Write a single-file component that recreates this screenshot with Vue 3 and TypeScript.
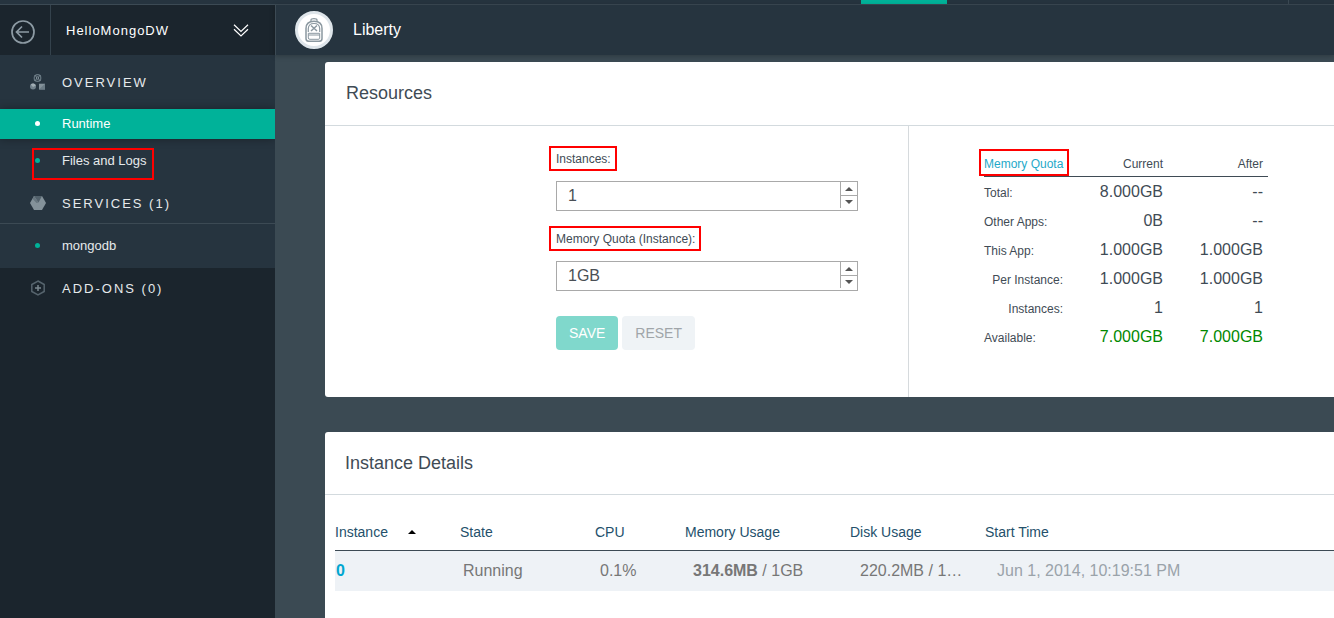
<script setup lang="ts">
import { ref } from 'vue'

interface QuotaRow {
  label: string
  current: string
  after: string
  indent?: boolean
  good?: boolean
}

interface InstanceRow {
  id: string
  state: string
  cpu: string
  memoryUsed: string
  memoryTotal: string
  disk: string
  started: string
}

const sizes = ['512MB', '1GB', '2GB']
const instances = ref('1')
const memory = ref('1GB')

const quotaRows: QuotaRow[] = [
  { label: 'Total:', current: '8.000GB', after: '--' },
  { label: 'Other Apps:', current: '0B', after: '--' },
  { label: 'This App:', current: '1.000GB', after: '1.000GB' },
  { label: 'Per Instance:', current: '1.000GB', after: '1.000GB', indent: true },
  { label: 'Instances:', current: '1', after: '1', indent: true },
  { label: 'Available:', current: '7.000GB', after: '7.000GB', good: true },
]

const instanceRows: InstanceRow[] = [
  {
    id: '0',
    state: 'Running',
    cpu: '0.1%',
    memoryUsed: '314.6MB',
    memoryTotal: '1GB',
    disk: '220.2MB / 1GB',
    started: 'Jun 1, 2014, 10:19:51 PM',
  },
]

function stepInstances(delta: number) {
  instances.value = String(Math.max(1, Number(instances.value) + delta))
}

function stepMemory(delta: number) {
  const next = sizes.indexOf(memory.value) + delta
  memory.value = sizes[Math.min(sizes.length - 1, Math.max(0, next))]
}
</script>

<template>
  <div class="app">
    <div class="topbar">
      <span class="topbar-tab"></span>
      <span class="topbar-divider"></span>
    </div>
    <div class="shell">
      <aside class="sidebar">
        <div class="app-switcher">
          <button class="back" type="button" aria-label="Back">
            <svg width="24" height="24" viewBox="0 0 24 24" fill="none" stroke="#8d9ba4" stroke-width="1.700">
              <circle cx="12" cy="12" r="11" />
              <path d="M18 12H6M11 6.500 5.500 12l5.500 5.500" />
            </svg>
          </button>
          <button class="app-name" type="button">
            <span>HelloMongoDW</span>
            <svg width="16" height="13" viewBox="0 0 16 13" fill="none" stroke="#fff" stroke-width="1.200">
              <path d="M1 .800 8 7.500l7-6.700M1 5.300 8 12l7-6.700" />
            </svg>
          </button>
        </div>
        <nav>
          <div class="group">
            <a class="section overview" href="#overview">
              <svg width="16" height="16" viewBox="0 0 16 16">
                <circle cx="7.500" cy="4" r="3.300" fill="none" stroke="#677781" stroke-width="1.200" />
                <circle cx="7.500" cy="4" r="1.200" fill="none" stroke="#84939c" />
                <path d="M4.500 1l2 2M10.500 1l-2 2M4.500 7l2-2M10.500 7l-2-2" stroke="#84939c" stroke-width=".800" />
                <circle cx="3" cy="12.500" r="3" fill="#71818b" />
                <path d="M.800 10.500 3 13l2.800-1.500A3 3 0 0 0 .800 10.500Z" fill="#a1adb3" />
                <path d="M9 9.700H15v5.800H9Z" fill="#84929a" />
                <path d="M9 15.500 15 9.700v5.800Z" fill="#6b7b85" />
              </svg>
              OVERVIEW
            </a>
            <a class="item active" href="#runtime"><i class="dot"></i>Runtime</a>
            <a class="item tall flagged" href="#files"><i class="dot"></i>Files and Logs</a>
            <a class="section services" href="#services">
              <svg width="16" height="16" viewBox="0 0 16 16">
                <path d="M4 1h8l4 7-4 7H4L0 8Z" fill="#84929a" />
                <path d="M4 1h8L8.500 7.500Z" fill="#52616b" />
                <path d="M4 1 2.500 3.700 6.500 8 8.500 7.500Z" fill="#67767f" />
              </svg>
              SERVICES (1)
            </a>
            <a class="item tall" href="#mongodb"><i class="dot"></i>mongodb</a>
          </div>
          <a class="section" href="#addons">
            <svg width="16" height="16" viewBox="0 0 16 16" fill="none" stroke="#56646d">
              <path d="M8 1l6.200 3.500v7L8 15l-6.200-3.500v-7Z" stroke-width="1.500" />
              <path d="M8 5v6M5 8h6" stroke="#7b878f" stroke-width="1.500" />
            </svg>
            ADD-ONS (0)
          </a>
        </nav>
      </aside>

      <div class="content">
        <header class="runtime-header">
          <span class="badge">
            <svg width="18" height="24" viewBox="0 0 18 24" fill="none" stroke="#8b98a0" stroke-width="1.200">
              <path d="M6 3.200V2Q6 .700 9 .700T12 2v1.200" />
              <path d="M1 10.500Q1 3.200 9 3.200t8 7.300V20.500Q17 23.300 14 23.300H4Q1 23.300 1 20.500Z" stroke-width="1.500" />
              <path d="M3.300 14v-3.500Q3.500 5.500 9 5.500t5.700 5V14" />
              <path d="M3.300 15.300h11.400v5Q14.700 21.300 13 21.300H5Q3.300 21.300 3.300 20ZM3.300 17h11.400" stroke-width="1" />
              <path d="M6 7.500 12 13M12 7.500 6 13" stroke-width="1.500" />
            </svg>
          </span>
          <h1>Liberty</h1>
        </header>

        <main>
          <section class="panel">
            <h2 class="resources-title">Resources</h2>
            <div class="resources">
              <form class="limits" @submit.prevent>
                <label class="flagged" for="instances">Instances:</label>
                <div class="stepper">
                  <input id="instances" v-model="instances" type="text" />
                  <div class="steps">
                    <button type="button" aria-label="More instances" @click="stepInstances(1)"><i class="up"></i></button>
                    <button type="button" aria-label="Fewer instances" @click="stepInstances(-1)"><i class="down"></i></button>
                  </div>
                </div>
                <label class="flagged" for="memory">Memory Quota (Instance):</label>
                <div class="stepper">
                  <input id="memory" v-model="memory" type="text" />
                  <div class="steps">
                    <button type="button" aria-label="More memory" @click="stepMemory(1)"><i class="up"></i></button>
                    <button type="button" aria-label="Less memory" @click="stepMemory(-1)"><i class="down"></i></button>
                  </div>
                </div>
                <div class="actions">
                  <button class="save" type="submit">SAVE</button>
                  <button class="reset" type="reset">RESET</button>
                </div>
              </form>
              <div class="quota-area">
                <table class="quota">
                  <thead>
                    <tr>
                      <th class="name"><span class="flagged">Memory Quota</span></th>
                      <th>Current</th>
                      <th>After</th>
                    </tr>
                  </thead>
                  <tbody>
                    <tr v-for="row in quotaRows" :key="row.label" :class="{ good: row.good }">
                      <th :class="{ indent: row.indent }" scope="row">{{ row.label }}</th>
                      <td>{{ row.current }}</td>
                      <td>{{ row.after }}</td>
                    </tr>
                  </tbody>
                </table>
              </div>
            </div>
          </section>

          <section class="panel details">
            <h2>Instance Details</h2>
            <table class="instances">
              <thead>
                <tr>
                  <th class="c-id">Instance<i class="sort"></i></th>
                  <th class="c-state">State</th>
                  <th class="c-cpu">CPU</th>
                  <th class="c-memory">Memory Usage</th>
                  <th class="c-disk">Disk Usage</th>
                  <th>Start Time</th>
                </tr>
              </thead>
              <tbody>
                <tr v-for="row in instanceRows" :key="row.id">
                  <td class="c-id"><a href="#instance">{{ row.id }}</a></td>
                  <td class="c-state">{{ row.state }}</td>
                  <td class="c-cpu">{{ row.cpu }}</td>
                  <td class="c-memory"><b>{{ row.memoryUsed }}</b> / {{ row.memoryTotal }}</td>
                  <td class="c-disk">{{ row.disk }}</td>
                  <td class="c-start">{{ row.started }}</td>
                </tr>
              </tbody>
            </table>
          </section>
        </main>
      </div>
    </div>
  </div>
</template>

<style>
body {
  margin: 0;
  background: #3b4a53;
}
</style>

<style scoped>
*,
*::after {
  box-sizing: border-box;
}

.app {
  display: flex;
  flex-direction: column;
  min-height: 100vh;
  overflow: hidden;
  font-family: "Liberation Sans", Arial, sans-serif;
  color: #3f4b55;
}

a {
  color: inherit;
  text-decoration: none;
}

button {
  padding: 0;
  border: 0;
  background: none;
  font: inherit;
  color: inherit;
  cursor: pointer;
}

h1,
h2 {
  margin: 0;
  font-weight: normal;
}

.flagged {
  position: relative;
}

.flagged::after {
  content: "";
  position: absolute;
  border: 2px solid #f00;
  pointer-events: none;
}

.topbar {
  display: flex;
  justify-content: flex-end;
  height: 5px;
  padding-right: 45px;
  background: #26343f;
  border-bottom: 1px solid #3c4a54;
}

.topbar-tab {
  width: 86px;
  margin-right: 341px;
  background: #00b299;
}

.topbar-divider {
  width: 1px;
  background: #3c4a54;
}

.shell {
  display: flex;
  flex: 1;
}

.sidebar {
  flex: 0 0 275px;
  background: #1b252d;
  color: #e6eaec;
}

.app-switcher {
  display: flex;
  height: 50px;
  color: #fff;
}

.back {
  display: flex;
  align-items: center;
  width: 51px;
  padding: 4px 0 0 11px;
  border-right: 1px solid #34424c;
}

.app-name {
  display: flex;
  flex: 1;
  align-items: center;
  justify-content: space-between;
  padding: 0 26px 0 15px;
  font-size: 13px;
  letter-spacing: 1px;
}

.group {
  overflow: hidden;
  background: #26343f;
}

.section {
  display: flex;
  align-items: center;
  height: 40px;
  padding-left: 30px;
  gap: 16px;
  font-size: 13px;
  letter-spacing: 2px;
}

.overview {
  height: 54px;
}

.services {
  height: 41px;
  border-bottom: 1px solid #3c4a54;
}

.item {
  display: flex;
  align-items: center;
  height: 30px;
  padding: 0 0 2px 35px;
  gap: 22px;
  font-size: 13px;
}

.item.tall {
  height: 44px;
}

.item.active {
  position: relative;
  background: #00b299;
  box-shadow: 0 0 10px rgba(0, 0, 0, 0.35);
  color: #fff;
}

.item.flagged::after {
  left: 32px;
  top: 9px;
  width: 122px;
  height: 32px;
}

.dot {
  width: 5px;
  height: 5px;
  border-radius: 50%;
  background: #00b299;
}

.active .dot {
  background: #fff;
}

.content {
  display: flex;
  flex: 1;
  flex-direction: column;
  min-width: 0;
  background: #3b4a53;
}

.runtime-header {
  display: flex;
  align-items: center;
  height: 50px;
  padding-left: 19px;
  gap: 20px;
  background: #26343f;
  border-left: 1px solid #3c4a54;
  box-shadow: 0 1px 5px rgba(0, 0, 0, 0.25);
  color: #fff;
}

.badge {
  display: flex;
  align-items: center;
  justify-content: center;
  width: 38px;
  height: 38px;
  border: 3px solid #dee5ea;
  border-radius: 50%;
  background: #fff;
}

h1 {
  font-size: 16px;
}

main {
  display: flex;
  flex: 1;
  flex-direction: column;
  gap: 35px;
  padding: 7px 0 0 50px;
}

.panel {
  border-radius: 3px 0 0 3px;
  background: #fff;
}

.details {
  flex: 1;
  border-radius: 3px 0 0;
}

h2 {
  padding: 0 20px;
  border-bottom: 1px solid #d3dade;
  font-size: 18px;
  line-height: 62px;
}

.resources-title {
  padding: 0 21px;
  line-height: 63px;
}

.resources {
  display: grid;
  grid-template-columns: 583fr 426fr;
}

.limits {
  justify-self: end;
  width: 302px;
  margin-right: 50px;
  padding: 25px 0 47px;
}

.limits label {
  display: block;
  width: fit-content;
  margin-bottom: 14px;
  font-size: 12px;
  line-height: 16px;
}

.limits .flagged::after {
  inset: -5px -6px -4px -7px;
}

.stepper {
  display: flex;
  height: 30px;
  margin-bottom: 20px;
  border: 1px solid #a9a9a9;
}

.stepper input {
  flex: 1;
  min-width: 0;
  padding: 0 11px;
  border: 0;
  outline: 0;
  background: none;
  font: inherit;
  font-size: 16px;
  color: #4a4f55;
}

.steps {
  display: flex;
  flex-direction: column;
  width: 17px;
  height: 26px;
}

.steps button {
  display: flex;
  align-items: center;
  justify-content: center;
  height: 12px;
  border-left: 1px solid #a9a9a9;
}

.steps button:first-child {
  height: 14px;
  border-bottom: 1px solid #a9a9a9;
}

.up,
.down,
.sort {
  border: 4px solid transparent;
}

.up {
  border-top: 0;
  border-bottom-color: #555;
}

.down {
  border-bottom: 0;
  border-top-color: #555;
}

.actions {
  display: flex;
  gap: 4px;
  padding-top: 5px;
}

.actions button {
  height: 34px;
  padding: 0 13px;
  border-radius: 4px;
  font-size: 14px;
}

.save {
  background: #80d8cc;
  color: #fff;
}

.reset {
  background: #eff3f6;
  color: #a0a5a9;
}

.quota-area {
  padding: 25px 20px 0 75px;
  border-left: 1px solid #d6dadd;
}

table {
  border-spacing: 0;
  table-layout: fixed;
}

th {
  font-weight: normal;
  white-space: nowrap;
}

.quota {
  width: 284px;
}

.quota th,
.quota td {
  height: 29px;
  padding: 0 5px 0 0;
  font-size: 16px;
  line-height: 20px;
  text-align: right;
  vertical-align: baseline;
}

.quota th {
  font-size: 12px;
}

.quota thead th {
  width: 100px;
  height: 26px;
  border-bottom: 1px solid #3f4b55;
  vertical-align: middle;
}

.quota thead .name {
  width: 84px;
  padding: 0;
  text-align: left;
  color: #1fa9c9;
}

.name .flagged::after {
  inset: -8px -6px -5px -5px;
}

.quota tbody th,
.quota tbody td {
  padding-top: 5px;
}

.quota tbody th {
  text-align: left;
}

.quota tbody .indent {
  text-align: right;
}

.quota .good td {
  color: #080;
}

.instances {
  width: calc(100% - 10px);
  margin: 19px 0 0 10px;
}

.instances th {
  height: 37px;
  padding: 0;
  border-bottom: 1px solid #3c4a54;
  font-size: 14px;
  text-align: left;
  color: #24506b;
}

.instances td {
  height: 40px;
  padding: 0;
  overflow: hidden;
  background: #eef2f6;
  font-size: 16px;
  text-overflow: ellipsis;
  white-space: nowrap;
  color: #777;
}

.c-id {
  width: 125px;
}

.c-state {
  width: 135px;
}

.c-cpu {
  width: 90px;
}

.c-memory {
  width: 165px;
}

.c-disk {
  width: 135px;
}

.instances td.c-id {
  padding-left: 1px;
  font-weight: bold;
  color: #00a6d0;
}

.instances td.c-state {
  padding-left: 3px;
}

.instances td.c-cpu {
  padding-left: 5px;
}

.instances td.c-memory {
  padding-left: 8px;
}

.instances td.c-disk {
  padding: 0 16px 0 10px;
}

.instances td.c-start {
  padding-left: 12px;
  color: #9aa3aa;
}

.sort {
  display: inline-block;
  margin: 0 0 3px 20px;
  border-top: 0;
  border-bottom-color: #000;
}
</style>
